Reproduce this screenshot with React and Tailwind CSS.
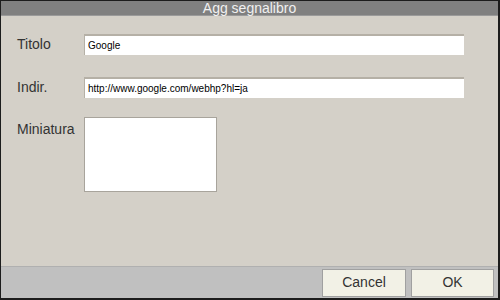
import React from 'react';

const font = { fontFamily: '"Liberation Sans", "Noto Sans CJK JP", sans-serif' };

const Field = ({ label, value }) => (
  <div className="flex items-center h-[21px]">
    <div className="w-[67px] text-[14px] text-[#333]">{label}</div>
    <div className="w-[380px] h-[21px] bg-white border-t-2 border-l border-[#b5b0a6] flex items-center pl-[3px] text-[10px] text-black">
      {value}
    </div>
  </div>
);

const App = () => {
  return (
    <div className="w-[500px] h-[300px] bg-[#1c1c1c] border-t border-l border-r-2 border-b-2 border-[#1c1c1c] flex flex-col" style={font}>
      <div className="h-[15px] bg-[#808080] border-b border-[#9a9a9a] flex items-center justify-center text-[14px] text-[#f0f0f0] leading-none">
        Agg segnalibro
      </div>
      <div className="flex-1 bg-[#d4d0c8] pl-[16px] pt-[18px] flex flex-col">
        <Field label="Titolo" value="Google" />
        <div className="h-[22px]" />
        <Field label="Indir." value="http://www.google.com/webhp?hl=ja" />
        <div className="flex mt-[19px]">
          <div className="w-[67px] text-[14px] text-[#333] pt-[2px]">Miniatura</div>
          <div className="w-[133px] h-[75px] bg-white border border-[#a8a49c]" />
        </div>
      </div>
      <div className="h-[32px] bg-[#c0c0c0] border-t border-[#b0b0b0] flex items-center justify-end gap-[5px] pr-[4px]">
        <button className="w-[84px] h-[28px] bg-[#f2f1e6] border border-[#a0a0a0] text-[14px] text-[#333]">Cancel</button>
        <button className="w-[83px] h-[28px] bg-[#f2f1e6] border border-[#a0a0a0] text-[14px] text-[#333]">OK</button>
      </div>
    </div>
  );
};

export default App;
